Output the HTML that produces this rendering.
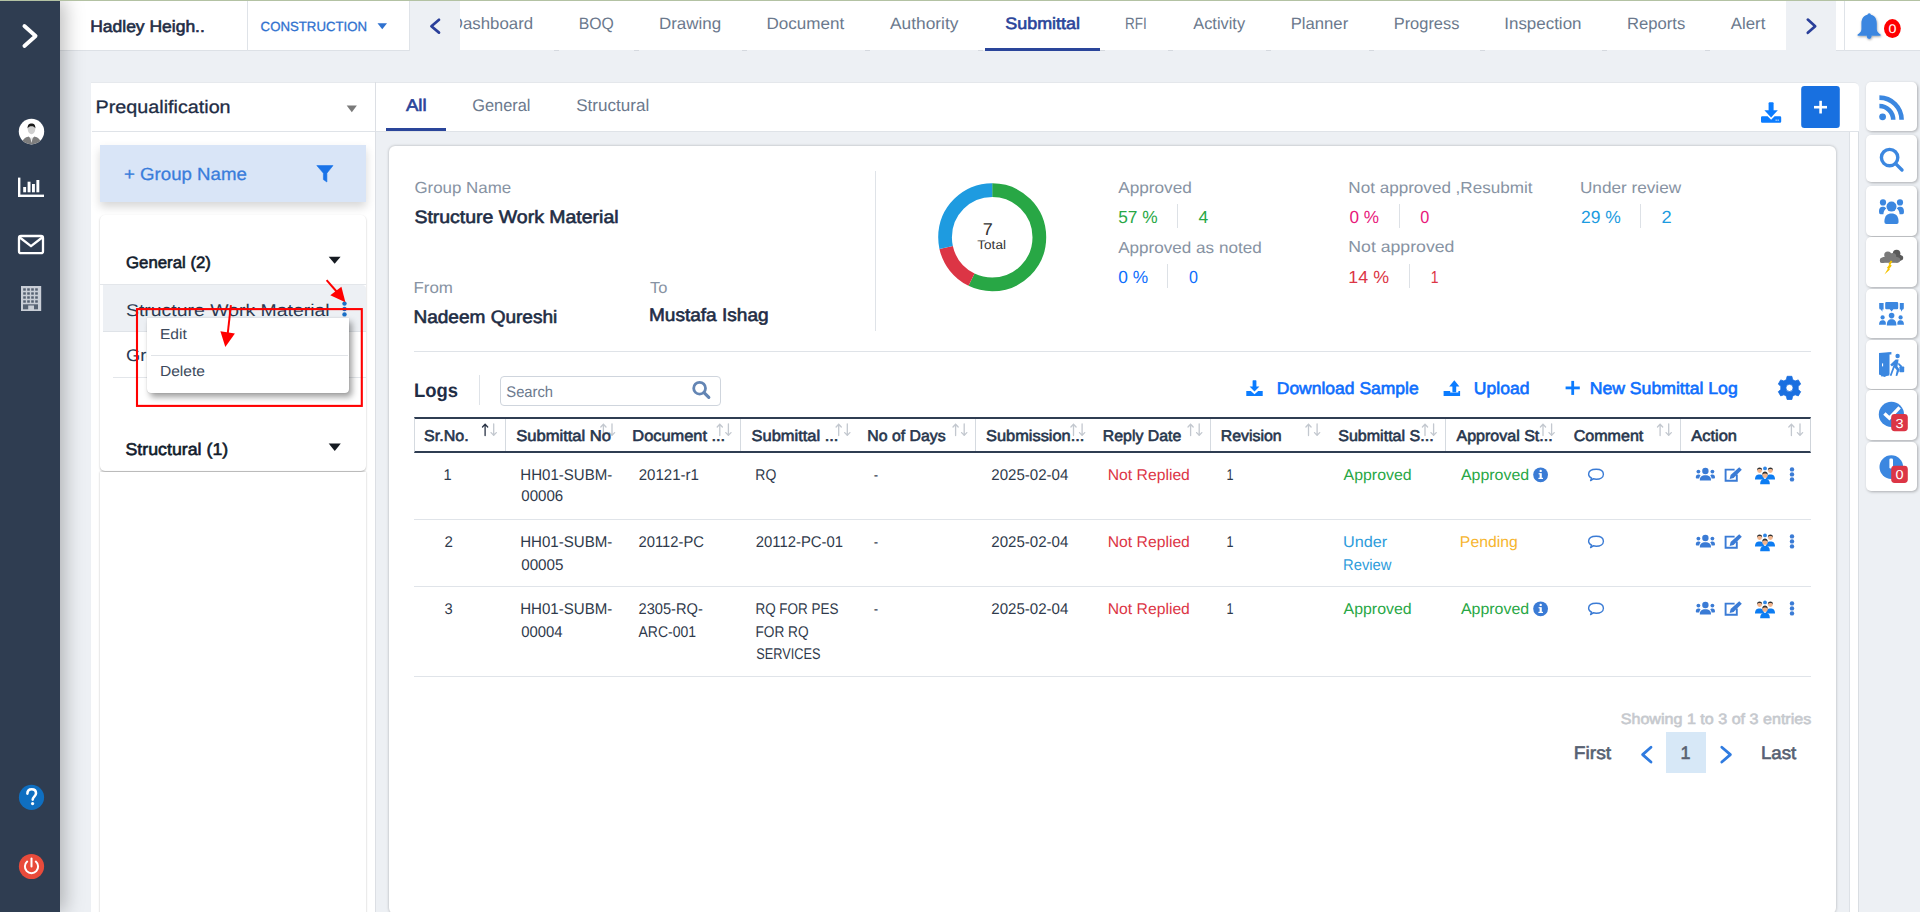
<!DOCTYPE html>
<html><head><meta charset="utf-8">
<style>
*{box-sizing:border-box;margin:0;padding:0}
html,body{width:1920px;height:912px;overflow:hidden}
body{position:relative;background:#edf0f4;font-family:"Liberation Sans",sans-serif}
.a{position:absolute}
svg.ov{position:absolute;left:0;top:0;width:1920px;height:912px;overflow:visible}
svg text{font-family:"Liberation Sans",sans-serif;text-rendering:geometricPrecision}
</style></head><body>
<!-- top line -->
<div class="a" style="left:0;top:0;width:1920px;height:1px;background:#b3c2a3;z-index:20"></div>
<!-- header -->
<div class="a" style="left:60px;top:1px;width:1860px;height:50px;background:#fff;border-bottom:1px solid #dde1e6"></div>
<div class="a" style="left:460px;top:50px;width:1326px;height:1px;background:#edf0f4"></div>
<div class="a" style="left:247px;top:1px;width:1px;height:50px;background:#dfe3e8"></div>
<div class="a" style="left:409px;top:1px;width:1px;height:50px;background:#dfe3e8"></div>
<div class="a" style="left:410px;top:1px;width:50px;height:50px;background:#edf0f4"></div>
<div class="a" style="left:1786px;top:1px;width:50px;height:51px;background:#edf0f4"></div>
<div class="a" style="left:1844px;top:1px;width:1px;height:50px;background:#dfe3e8"></div>
<div class="a" style="left:553.5px;top:50px;width:5px;height:1px;background:#d5d9df"></div><div class="a" style="left:633.5px;top:50px;width:5px;height:1px;background:#d5d9df"></div><div class="a" style="left:741.5px;top:50px;width:5px;height:1px;background:#d5d9df"></div><div class="a" style="left:864.5px;top:50px;width:5px;height:1px;background:#d5d9df"></div><div class="a" style="left:978.0px;top:50px;width:5px;height:1px;background:#d5d9df"></div><div class="a" style="left:1099.5px;top:50px;width:5px;height:1px;background:#d5d9df"></div><div class="a" style="left:1167.5px;top:50px;width:5px;height:1px;background:#d5d9df"></div><div class="a" style="left:1265.5px;top:50px;width:5px;height:1px;background:#d5d9df"></div><div class="a" style="left:1368.5px;top:50px;width:5px;height:1px;background:#d5d9df"></div><div class="a" style="left:1479.5px;top:50px;width:5px;height:1px;background:#d5d9df"></div><div class="a" style="left:1601.5px;top:50px;width:5px;height:1px;background:#d5d9df"></div><div class="a" style="left:1705.1px;top:50px;width:5px;height:1px;background:#d5d9df"></div>
<div class="a" style="left:985px;top:48px;width:115px;height:3px;background:#2a459a;z-index:1"></div>
<!-- sidebar -->
<div class="a" style="left:0;top:0;width:60px;height:912px;background:#2f3d51;box-shadow:5px 0 18px rgba(0,0,0,.26);z-index:10"></div>

<!-- left panel -->
<div class="a" style="left:91px;top:82px;width:285px;height:830px;background:#fff;border-top:1px solid #e6e9ed;border-right:1px solid #dcdfe4"></div>
<div class="a" style="left:92px;top:131px;width:283px;height:1px;background:#dfe3e8"></div>
<div class="a" style="left:100px;top:145px;width:266px;height:57px;background:#d9e5f7;box-shadow:0 5px 9px rgba(0,0,0,.16)"></div>
<div class="a" style="left:100px;top:215px;width:266px;height:256px;background:#fff;border-radius:5px;box-shadow:0 1px 2px rgba(0,0,0,.28)"></div>
<div class="a" style="left:100px;top:472px;width:266px;height:460px;background:#fff;border-radius:0;box-shadow:0 0 2px rgba(0,0,0,.25)"></div>
<div class="a" style="left:100px;top:284px;width:266px;height:1px;background:#e3e6ea"></div>
<div class="a" style="left:103px;top:285px;width:263px;height:47px;background:#edf0f4;border-top-right-radius:4px;border-bottom:1px solid #dfe3e8"></div>
<div class="a" style="left:113px;top:377px;width:253px;height:1px;background:#e3e6ea"></div>

<!-- main container -->
<div class="a" style="left:375px;top:82px;width:1484px;height:830px;background:#edf0f4;border-left:1px solid #dcdfe4"></div>
<div class="a" style="left:376px;top:82px;width:1483px;height:50px;background:#fff;border-top:1px solid #e4e7eb;border-bottom:1px solid #dfe3e8;border-top-right-radius:5px"></div>
<div class="a" style="left:1849px;top:132px;width:10px;height:780px;background:#fff;border-left:1px solid #dde1e6;border-right:1px solid #d9dde2"></div>
<div class="a" style="left:386px;top:128px;width:60px;height:3px;background:#2a459a"></div>
<!-- main card -->
<div class="a" style="left:389px;top:146px;width:1447px;height:768px;background:#fff;border-radius:6px;box-shadow:0 0 3px rgba(0,0,0,.28)"></div>
<div class="a" style="left:875px;top:171px;width:1px;height:160px;background:#dfe3e8"></div>
<div class="a" style="left:414px;top:351px;width:1397px;height:1px;background:#dfe3e8"></div>
<div class="a" style="left:479px;top:375px;width:1px;height:30px;background:#dfe3e8"></div>
<div class="a" style="left:500px;top:376px;width:221px;height:30px;border:1px solid #cfd5dd;border-radius:4px"></div>
<!-- stats separators -->
<div class="a" style="left:1177px;top:204px;width:1px;height:24px;background:#dde1e6"></div>
<div class="a" style="left:1167px;top:264px;width:1px;height:24px;background:#dde1e6"></div>
<div class="a" style="left:1399px;top:204px;width:1px;height:24px;background:#dde1e6"></div>
<div class="a" style="left:1409px;top:264px;width:1px;height:24px;background:#dde1e6"></div>
<div class="a" style="left:1640px;top:204px;width:1px;height:24px;background:#dde1e6"></div>
<!-- table -->
<div class="a" style="left:414px;top:417px;width:1397px;height:36px;border-top:2px solid #2f3d52;border-bottom:2px solid #2f3d52;border-left:1px solid #d5dae0;border-right:1px solid #cfd4da"></div>
<div class="a" style="left:505px;top:419px;width:1px;height:32px;background:#d5dae0"></div>
<div class="a" style="left:740px;top:419px;width:1px;height:32px;background:#d5dae0"></div>
<div class="a" style="left:975px;top:419px;width:1px;height:32px;background:#d5dae0"></div>
<div class="a" style="left:1210px;top:419px;width:1px;height:32px;background:#d5dae0"></div>
<div class="a" style="left:1445px;top:419px;width:1px;height:32px;background:#d5dae0"></div>
<div class="a" style="left:1680px;top:419px;width:1px;height:32px;background:#d5dae0"></div>
<div class="a" style="left:414px;top:519px;width:1397px;height:1px;background:#e0e4e9"></div>
<div class="a" style="left:414px;top:586px;width:1397px;height:1px;background:#e0e4e9"></div>
<div class="a" style="left:414px;top:676px;width:1397px;height:1px;background:#e0e4e9"></div>
<!-- pagination box -->
<div class="a" style="left:1666px;top:732px;width:40px;height:41px;background:#d7e8f7"></div>

<!-- right icon column -->
<div class="a" style="left:1866px;top:82px;width:51px;height:49px;background:#fff;border-radius:5px;box-shadow:1px 1px 3px rgba(0,0,0,.28)"></div>
<div class="a" style="left:1866px;top:135px;width:51px;height:47px;background:#fff;border-radius:5px;box-shadow:1px 1px 3px rgba(0,0,0,.28)"></div>
<div class="a" style="left:1866px;top:186px;width:51px;height:50px;background:#fff;border-radius:5px;box-shadow:1px 1px 3px rgba(0,0,0,.28)"></div>
<div class="a" style="left:1866px;top:237px;width:51px;height:50px;background:#fff;border-radius:5px;box-shadow:1px 1px 3px rgba(0,0,0,.28)"></div>
<div class="a" style="left:1866px;top:289px;width:51px;height:49px;background:#fff;border-radius:5px;box-shadow:1px 1px 3px rgba(0,0,0,.28)"></div>
<div class="a" style="left:1866px;top:340px;width:51px;height:49px;background:#fff;border-radius:5px;box-shadow:1px 1px 3px rgba(0,0,0,.28)"></div>
<div class="a" style="left:1866px;top:390px;width:51px;height:50px;background:#fff;border-radius:5px;box-shadow:1px 1px 3px rgba(0,0,0,.28)"></div>
<div class="a" style="left:1866px;top:442px;width:51px;height:49px;background:#fff;border-radius:5px;box-shadow:1px 1px 3px rgba(0,0,0,.28)"></div>

<!-- main overlay: text + icons -->
<svg class="ov" style="z-index:5" viewBox="0 0 1920 912">
<defs>
<clipPath id="tabclip"><rect x="460" y="0" width="1326" height="50"/></clipPath>
<clipPath id="avclip"><circle cx="31.5" cy="131.5" r="12.5"/></clipPath>
<filter id="sh1" x="-30%" y="-30%" width="160%" height="160%"><feDropShadow dx="0.5" dy="1" stdDeviation="1" flood-opacity=".35"/></filter>
</defs>
<!-- header icons -->
<polygon points="377.5,23.2 387,23.2 382.25,29.2" fill="#2f71cf"/>
<polyline points="439,19.8 431.4,26.2 439,32.6" fill="none" stroke="#2a3f9a" stroke-width="2.7" stroke-linecap="round" stroke-linejoin="round"/>
<polyline points="1807.8,19.6 1815.2,26.2 1807.8,32.8" fill="none" stroke="#2a3f9a" stroke-width="2.7" stroke-linecap="round" stroke-linejoin="round"/>
<g filter="url(#sh1)" fill="#3a86e0">
<path d="M1869.2,14.6 C1874.2,14.6 1876.8,18.4 1876.8,23.6 L1876.8,29.2 C1876.8,31.6 1878.6,33.2 1880.6,34.6 L1880.6,35.8 L1857.6,35.8 L1857.6,34.6 C1859.6,33.2 1861.4,31.6 1861.4,29.2 L1861.4,23.6 C1861.4,18.4 1864.2,14.6 1869.2,14.6 Z"/>
<circle cx="1869.2" cy="14.8" r="1.6"/>
<circle cx="1869.2" cy="36.6" r="2.4"/>
</g>
<ellipse cx="1892.4" cy="28.6" rx="8.4" ry="9.5" fill="#ff0000"/>
<!-- left panel icons -->
<polygon points="346.7,105.5 356.9,105.5 351.8,112.2" fill="#7a7a7a"/>
<path d="M316.8,165.6 L333,165.6 L326.9,173.2 L326.9,182 L323.4,179.6 L323.4,173.2 Z" fill="#1a73e8" stroke="#1a73e8" stroke-width="0.6" stroke-linejoin="round"/>
<polygon points="328.7,256.8 340.6,256.8 334.65,263.7" fill="#161b22"/>
<polygon points="328.7,443.4 340.8,443.4 334.75,451" fill="#161b22"/>
<g fill="#1a6fc7"><circle cx="344.5" cy="303.6" r="2.2"/><circle cx="344.5" cy="309" r="2.2"/><circle cx="344.5" cy="314.4" r="2.2"/></g>
<!-- top right download + plus -->
<g fill="#0b7cff">
<rect x="1768.6" y="102.2" width="5" height="9" rx="1"/>
<polygon points="1764.4,110.2 1777.8,110.2 1771.1,117.4"/>
<path d="M1761,117.4 Q1761,116.2 1762.2,116.2 L1767.6,116.2 L1771.1,119.8 L1774.6,116.2 L1780,116.2 Q1781.2,116.2 1781.2,117.4 L1781.2,121.6 Q1781.2,122.8 1780,122.8 L1762.2,122.8 Q1761,122.8 1761,121.6 Z"/>
</g>
<rect x="1775.6" y="119.6" width="1.1" height="1.1" fill="#fff"/><rect x="1777.6" y="119.6" width="1.1" height="1.1" fill="#fff"/>
<rect x="1801.2" y="86" width="38.6" height="41.9" rx="3.2" fill="#1870e0"/>
<line x1="1814" y1="107.2" x2="1827" y2="107.2" stroke="#fff" stroke-width="2.6"/>
<line x1="1820.6" y1="100.8" x2="1820.6" y2="113.5" stroke="#fff" stroke-width="2.6"/>
<!-- right column -->
<g fill="#3b87e0">
<circle cx="1882.6" cy="116.8" r="3.4"/>
<path d="M1879.4,97.6 A22.2,22.2 0 0 1 1901.6,119.8" fill="none" stroke="#3b87e0" stroke-width="4.6"/>
<path d="M1879.4,106 A13.8,13.8 0 0 1 1893.2,119.8" fill="none" stroke="#3b87e0" stroke-width="4.6"/>
<circle cx="1889.6" cy="157.6" r="8.2" fill="none" stroke="#3b87e0" stroke-width="3.4"/>
<line x1="1895.6" y1="163.6" x2="1902" y2="170" stroke="#3b87e0" stroke-width="3.4" stroke-linecap="round"/>
<!-- people -->
<circle cx="1891.5" cy="206.6" r="5"/>
<path d="M1884.4,222 C1884.4,215.5 1887.4,213.4 1891.5,213.4 C1895.6,213.4 1898.6,215.5 1898.6,222 Q1898.6,224 1896.6,224 L1886.4,224 Q1884.4,224 1884.4,222 Z"/>
<circle cx="1883" cy="202.4" r="3.1"/><circle cx="1900" cy="202.4" r="3.1"/>
<path d="M1879,212 C1879,207.8 1880.6,206.8 1883,206.8 C1884.6,206.8 1885.6,207.4 1886.2,208.6 C1884.6,209.8 1883.6,211.6 1883.4,214.2 L1880.6,214.2 Q1879,214.2 1879,212 Z"/>
<path d="M1904,212 C1904,207.8 1902.4,206.8 1900,206.8 C1898.4,206.8 1897.4,207.4 1896.8,208.6 C1898.4,209.8 1899.4,211.6 1899.6,214.2 L1902.4,214.2 Q1904,214.2 1904,212 Z"/>
</g>
<!-- storm -->
<g fill="#595959"><circle cx="1896.6" cy="253.6" r="3.8"/><circle cx="1900.6" cy="257.8" r="2.6"/><rect x="1894" y="255" width="7" height="5.6"/></g>
<g fill="#7a7a7a"><circle cx="1882.6" cy="260.2" r="2.7"/><circle cx="1887.8" cy="255" r="3.6"/><circle cx="1892.8" cy="256.4" r="3.4"/><circle cx="1897.4" cy="260" r="2.8"/><rect x="1882.6" y="257" width="15" height="5.8"/><rect x="1880" y="260" width="4" height="2.8" rx="1.4"/></g>
<path d="M1890.8,260.4 L1892.4,261.2 L1890.4,264.8 L1891.8,265.4 L1889.2,269 L1890,269.4 L1884.4,274.6 L1888,268.6 L1886.8,268 L1889.4,264.6 L1888.4,264 Z" fill="#f4c300"/>
<!-- meeting -->
<g fill="#3b87e0">
<path d="M1886.4,302 L1897,302 Q1898.2,302 1898.2,303.2 L1898.2,308 Q1898.2,309.2 1897,309.2 L1893.4,309.2 L1891.6,311.6 L1889.8,309.2 L1886.4,309.2 Q1885.2,309.2 1885.2,308 L1885.2,303.2 Q1885.2,302 1886.4,302 Z"/>
<path d="M1879.2,303 L1883.6,303 L1883.6,309.6 L1882.4,309.6 L1882.4,311.8 L1880.8,309.6 Q1879.2,309.6 1879.2,308 Z"/>
<path d="M1903.8,303 L1899.8,303 L1899.8,309.6 L1901,309.6 L1901,311.8 L1902.6,309.6 Q1903.8,309.6 1903.8,308 Z"/>
<circle cx="1891.6" cy="315.6" r="2.8"/>
<path d="M1886.8,325.6 C1886.8,320.8 1888.6,319.2 1891.6,319.2 C1894.6,319.2 1896.4,320.8 1896.4,325.6 Z"/>
<circle cx="1882.6" cy="317.4" r="2.1"/><circle cx="1900.6" cy="317.4" r="2.1"/>
<path d="M1879,324.8 C1879,321.4 1880.4,320.2 1882.6,320.2 C1884.2,320.2 1885.4,320.8 1885.8,322.4 L1885.8,324.8 Z"/>
<path d="M1904,324.8 C1904,321.4 1902.6,320.2 1900.6,320.2 C1899,320.2 1897.8,320.8 1897.4,322.4 L1897.4,324.8 Z"/>
</g>
<!-- door exit -->
<g fill="#3b87e0">
<path d="M1879,353 L1891.4,352 L1891.4,354.6 L1889.4,354.6 L1889.4,374.4 L1884.6,377 L1879,374.6 Z"/>
<path d="M1881.2,353.4 L1889.2,352.8 L1889.2,375.4 L1881.2,376.4 Z" fill="#3b87e0"/>
<circle cx="1897.6" cy="356" r="2.2"/>
<path d="M1895.6,359.4 L1898.6,359.6 L1897.4,366.4 L1899.6,369.4 L1897.2,376 L1895.6,375.8 L1896.8,370.2 L1894.6,367.6 L1891.4,376 L1889.8,375.4 L1893.6,365 L1892,366.4 L1890.2,364.8 Z"/>
<path d="M1898.4,362.4 L1902.4,366.2 L1900.8,367.4 L1898.2,364.8 Z"/>
<rect x="1899.4" y="366.4" width="4.8" height="5.8" rx="0.8"/>
</g>
<rect x="1882" y="363.4" width="1.1" height="3" fill="#fff"/>
<!-- check circle + badge -->
<circle cx="1891.4" cy="414.4" r="12.6" fill="#3b87e0"/>
<polyline points="1884.4,413.4 1889.4,418.2 1899.6,407.4" fill="none" stroke="#fff" stroke-width="3.4"/>
<rect x="1891.2" y="414" width="16.6" height="17.2" rx="3.4" fill="#dc3545"/>
<!-- info circle + badge -->
<circle cx="1891.3" cy="467.1" r="11.8" fill="#3b87e0"/>
<rect x="1889.4" y="458.6" width="3.6" height="9.8" rx="1.2" fill="#fff"/>
<rect x="1891.2" y="465.8" width="16.6" height="17.2" rx="3.4" fill="#dc3545"/>
<!-- donut -->
<g transform="rotate(-90 992.2 237.3)" fill="none" stroke-width="13.7">
<circle cx="992.2" cy="237.3" r="47.15" stroke="#28a745" stroke-dasharray="169.29 400"/>
<circle cx="992.2" cy="237.3" r="47.15" stroke="#dc3545" stroke-dasharray="42.32 400" stroke-dashoffset="-169.29"/>
<circle cx="992.2" cy="237.3" r="47.15" stroke="#1e9be0" stroke-dasharray="84.64 400" stroke-dashoffset="-211.61"/>
</g>
<!-- search icon -->
<circle cx="699.6" cy="388.2" r="5.9" fill="none" stroke="#6385b4" stroke-width="2.8"/>
<line x1="704" y1="392.6" x2="708.8" y2="397.4" stroke="#6385b4" stroke-width="3.2" stroke-linecap="round"/>
<!-- download sample -->
<g fill="#0b7cff">
<rect x="1252.6" y="380.3" width="3.8" height="7" rx="0.6"/>
<polygon points="1249.6,386.4 1259.4,386.4 1254.5,391.6"/>
<path d="M1246.3,391 L1250.8,391 L1254.5,394.2 L1258.2,391 L1262.7,391 L1262.7,396 L1246.3,396 Z"/>
<rect x="1452.4" y="385.6" width="3.8" height="6.6" rx="0.6"/>
<polygon points="1449.2,386.6 1459.4,386.6 1454.3,380.3"/>
<path d="M1443.6,391 L1450.2,391 L1450.2,392.6 L1458.4,392.6 L1458.4,391 L1460.1,391 L1460.1,396 L1443.6,396 Z"/>
</g>
<line x1="1565.6" y1="387.9" x2="1579.8" y2="387.9" stroke="#0b7cff" stroke-width="2.8"/>
<line x1="1572.7" y1="380.9" x2="1572.7" y2="394.9" stroke="#0b7cff" stroke-width="2.8"/>
<!-- gear -->
<g transform="translate(1789.5 387.9)">
<path fill="#1a6fe0" fill-rule="evenodd" d="M-2.4,-11.6 L2.4,-11.6 L3.1,-8.3 L5.6,-6.9 L8.8,-8 L11.2,-3.8 L8.7,-1.6 L8.7,1.6 L11.2,3.8 L8.8,8 L5.6,6.9 L3.1,8.3 L2.4,11.6 L-2.4,11.6 L-3.1,8.3 L-5.6,6.9 L-8.8,8 L-11.2,3.8 L-8.7,1.6 L-8.7,-1.6 L-11.2,-3.8 L-8.8,-8 L-5.6,-6.9 L-3.1,-8.3 Z M0,-3.6 A3.6,3.6 0 1 0 0,3.6 A3.6,3.6 0 1 0 0,-3.6 Z" stroke="#1a6fe0" stroke-width="0.8" stroke-linejoin="round"/>
</g>
<g fill="none" stroke-width="1.3" stroke-linecap="round" stroke-linejoin="round"><path d="M485.1,435.6 L485.1,424.2 M482.5,427 L485.1,424.2 L487.7,427" stroke="#2a3446"/><path d="M493.7,423.8 L493.7,435.4 M491.1,432.6 L493.7,435.4 L496.3,432.6" stroke="#c3c8cf"/></g>
<g fill="none" stroke-width="1.3" stroke-linecap="round" stroke-linejoin="round"><path d="M603.4,435.6 L603.4,424.2 M600.8,427 L603.4,424.2 L606.0,427" stroke="#c3c8cf"/><path d="M612.0,423.8 L612.0,435.4 M609.4,432.6 L612.0,435.4 L614.6,432.6" stroke="#c3c8cf"/></g>
<g fill="none" stroke-width="1.3" stroke-linecap="round" stroke-linejoin="round"><path d="M719.8,435.6 L719.8,424.2 M717.2,427 L719.8,424.2 L722.4,427" stroke="#c3c8cf"/><path d="M728.4,423.8 L728.4,435.4 M725.8,432.6 L728.4,435.4 L731.0,432.6" stroke="#c3c8cf"/></g>
<g fill="none" stroke-width="1.3" stroke-linecap="round" stroke-linejoin="round"><path d="M838.7,435.6 L838.7,424.2 M836.1,427 L838.7,424.2 L841.3,427" stroke="#c3c8cf"/><path d="M847.3,423.8 L847.3,435.4 M844.7,432.6 L847.3,435.4 L849.9,432.6" stroke="#c3c8cf"/></g>
<g fill="none" stroke-width="1.3" stroke-linecap="round" stroke-linejoin="round"><path d="M955.6,435.6 L955.6,424.2 M953.0,427 L955.6,424.2 L958.2,427" stroke="#c3c8cf"/><path d="M964.2,423.8 L964.2,435.4 M961.6,432.6 L964.2,435.4 L966.8,432.6" stroke="#c3c8cf"/></g>
<g fill="none" stroke-width="1.3" stroke-linecap="round" stroke-linejoin="round"><path d="M1073.5,435.6 L1073.5,424.2 M1070.9,427 L1073.5,424.2 L1076.1,427" stroke="#c3c8cf"/><path d="M1082.1,423.8 L1082.1,435.4 M1079.5,432.6 L1082.1,435.4 L1084.7,432.6" stroke="#c3c8cf"/></g>
<g fill="none" stroke-width="1.3" stroke-linecap="round" stroke-linejoin="round"><path d="M1190.6,435.6 L1190.6,424.2 M1188.0,427 L1190.6,424.2 L1193.2,427" stroke="#c3c8cf"/><path d="M1199.2,423.8 L1199.2,435.4 M1196.6,432.6 L1199.2,435.4 L1201.8,432.6" stroke="#c3c8cf"/></g>
<g fill="none" stroke-width="1.3" stroke-linecap="round" stroke-linejoin="round"><path d="M1308.5,435.6 L1308.5,424.2 M1305.9,427 L1308.5,424.2 L1311.1,427" stroke="#c3c8cf"/><path d="M1317.1,423.8 L1317.1,435.4 M1314.5,432.6 L1317.1,435.4 L1319.7,432.6" stroke="#c3c8cf"/></g>
<g fill="none" stroke-width="1.3" stroke-linecap="round" stroke-linejoin="round"><path d="M1425.0,435.6 L1425.0,424.2 M1422.4,427 L1425.0,424.2 L1427.6,427" stroke="#c3c8cf"/><path d="M1433.6,423.8 L1433.6,435.4 M1431.0,432.6 L1433.6,435.4 L1436.2,432.6" stroke="#c3c8cf"/></g>
<g fill="none" stroke-width="1.3" stroke-linecap="round" stroke-linejoin="round"><path d="M1543.0,435.6 L1543.0,424.2 M1540.4,427 L1543.0,424.2 L1545.6,427" stroke="#c3c8cf"/><path d="M1551.6,423.8 L1551.6,435.4 M1549.0,432.6 L1551.6,435.4 L1554.2,432.6" stroke="#c3c8cf"/></g>
<g fill="none" stroke-width="1.3" stroke-linecap="round" stroke-linejoin="round"><path d="M1660.1,435.6 L1660.1,424.2 M1657.5,427 L1660.1,424.2 L1662.7,427" stroke="#c3c8cf"/><path d="M1668.7,423.8 L1668.7,435.4 M1666.1,432.6 L1668.7,435.4 L1671.3,432.6" stroke="#c3c8cf"/></g>
<g fill="none" stroke-width="1.3" stroke-linecap="round" stroke-linejoin="round"><path d="M1791.4,435.6 L1791.4,424.2 M1788.8,427 L1791.4,424.2 L1794.0,427" stroke="#c3c8cf"/><path d="M1800.0,423.8 L1800.0,435.4 M1797.4,432.6 L1800.0,435.4 L1802.6,432.6" stroke="#c3c8cf"/></g>
<circle cx="1540.6" cy="474.8" r="7.4" fill="#3a7bd5"/><rect x="1539.6" y="473.2" width="2.2" height="5.6" fill="#fff"/><circle cx="1540.7" cy="470.9" r="1.2" fill="#fff"/><rect x="1538.4" y="477.8" width="4.6" height="1.2" fill="#fff"/><rect x="1538.6" y="473.2" width="2" height="1.1" fill="#fff"/>
<path d="M1590.6,480.6 L1591.6,478.2 C1589.4,477.0 1588.6,475.6 1588.6,474.2 C1588.6,471.0 1591.8,469.2 1596.2,469.2 C1600.6,469.2 1603.4,471.2 1603.4,474.2 C1603.4,477.2 1600.4,479.2 1596.2,479.2 C1595.2,479.2 1594,479.0 1593.2,478.8 Z" fill="none" stroke="#3a7bd5" stroke-width="1.4" stroke-linejoin="round"/>
<g fill="#3a7bd5" transform="translate(0 0)"><circle cx="1705.4" cy="471" r="3.2"/><path d="M1699.8,480.4 C1699.8,476.6 1701.6,475.2 1705.4,475.2 C1709.2,475.2 1711,476.6 1711,480.4 Z"/><circle cx="1698.4" cy="471.6" r="1.9"/><circle cx="1712.4" cy="471.6" r="1.9"/><path d="M1695.8,477.8 C1695.8,475.4 1696.6,474.4 1698.4,474.4 C1699.4,474.4 1700.2,474.8 1700.6,475.6 C1699.8,476.4 1699.4,477.2 1699.2,478.4 L1696.4,478.4 Z"/><path d="M1715,477.8 C1715,475.4 1714.2,474.4 1712.4,474.4 C1711.4,474.4 1710.6,474.8 1710.2,475.6 C1711,476.4 1711.4,477.2 1711.6,478.4 L1714.4,478.4 Z"/></g>
<g transform="translate(0 0)"><path d="M1734.6,469.6 L1725.6,469.6 L1725.6,480.8 L1736.8,480.8 L1736.8,474.6" fill="none" stroke="#3a7bd5" stroke-width="1.9"/><path d="M1739.2,467.2 L1741.8,469.8 L1733.6,478 L1729.6,479 L1730.6,475 Z" fill="#3a7bd5"/></g>
<g transform="translate(0 0)"><circle cx="1759.6" cy="470.6" r="2.4" fill="#f2b48c"/><path d="M1757,470.4 C1757,468 1758.4,467.4 1759.6,467.4 C1760.8,467.4 1762.2,468 1762.2,470.4 C1761.6,469.2 1760.6,469 1759.6,469 C1758.6,469 1757.6,469.2 1757,470.4Z" fill="#333"/><path d="M1755,479.6 C1755,475.6 1756.8,474.4 1759.6,474.4 C1762.4,474.4 1764,475.6 1764,479.6 Z" fill="#0c7cf2"/><circle cx="1770.4" cy="470.6" r="2.4" fill="#f2b48c"/><path d="M1767.8,470.4 C1767.8,468 1769.2,467.4 1770.4,467.4 C1771.6,467.4 1773,468 1773,470.4 C1772.4,469.2 1771.4,469 1770.4,469 C1769.4,469 1768.4,469.2 1767.8,470.4Z" fill="#333"/><path d="M1766,479.6 C1766,475.6 1767.6,474.4 1770.4,474.4 C1773.2,474.4 1775,475.6 1775,479.6 Z" fill="#0c7cf2"/><circle cx="1765" cy="468.4" r="1.9" fill="#2f86e6"/><circle cx="1765" cy="475.2" r="2.6" fill="#f2b48c"/><path d="M1762.2,475 C1762.2,472.2 1763.6,471.6 1765,471.6 C1766.4,471.6 1767.8,472.2 1767.8,475 C1767,473.8 1766,473.6 1765,473.6 C1764,473.6 1763,473.8 1762.2,475Z" fill="#333"/><path d="M1760.2,484.2 C1760.2,480.2 1762,478.8 1765,478.8 C1768,478.8 1769.8,480.2 1769.8,484.2 Z" fill="#0c7cf2"/></g>
<g fill="#3a7bd5"><circle cx="1792" cy="469.4" r="2.2"/><circle cx="1792" cy="474.4" r="2.2"/><circle cx="1792" cy="479.4" r="2.2"/></g>
<path d="M1590.6,547.6 L1591.6,545.2 C1589.4,544.0 1588.6,542.6 1588.6,541.2 C1588.6,538.0 1591.8,536.2 1596.2,536.2 C1600.6,536.2 1603.4,538.2 1603.4,541.2 C1603.4,544.2 1600.4,546.2 1596.2,546.2 C1595.2,546.2 1594,546.0 1593.2,545.8 Z" fill="none" stroke="#3a7bd5" stroke-width="1.4" stroke-linejoin="round"/>
<g fill="#3a7bd5" transform="translate(0 67)"><circle cx="1705.4" cy="471" r="3.2"/><path d="M1699.8,480.4 C1699.8,476.6 1701.6,475.2 1705.4,475.2 C1709.2,475.2 1711,476.6 1711,480.4 Z"/><circle cx="1698.4" cy="471.6" r="1.9"/><circle cx="1712.4" cy="471.6" r="1.9"/><path d="M1695.8,477.8 C1695.8,475.4 1696.6,474.4 1698.4,474.4 C1699.4,474.4 1700.2,474.8 1700.6,475.6 C1699.8,476.4 1699.4,477.2 1699.2,478.4 L1696.4,478.4 Z"/><path d="M1715,477.8 C1715,475.4 1714.2,474.4 1712.4,474.4 C1711.4,474.4 1710.6,474.8 1710.2,475.6 C1711,476.4 1711.4,477.2 1711.6,478.4 L1714.4,478.4 Z"/></g>
<g transform="translate(0 67)"><path d="M1734.6,469.6 L1725.6,469.6 L1725.6,480.8 L1736.8,480.8 L1736.8,474.6" fill="none" stroke="#3a7bd5" stroke-width="1.9"/><path d="M1739.2,467.2 L1741.8,469.8 L1733.6,478 L1729.6,479 L1730.6,475 Z" fill="#3a7bd5"/></g>
<g transform="translate(0 67)"><circle cx="1759.6" cy="470.6" r="2.4" fill="#f2b48c"/><path d="M1757,470.4 C1757,468 1758.4,467.4 1759.6,467.4 C1760.8,467.4 1762.2,468 1762.2,470.4 C1761.6,469.2 1760.6,469 1759.6,469 C1758.6,469 1757.6,469.2 1757,470.4Z" fill="#333"/><path d="M1755,479.6 C1755,475.6 1756.8,474.4 1759.6,474.4 C1762.4,474.4 1764,475.6 1764,479.6 Z" fill="#0c7cf2"/><circle cx="1770.4" cy="470.6" r="2.4" fill="#f2b48c"/><path d="M1767.8,470.4 C1767.8,468 1769.2,467.4 1770.4,467.4 C1771.6,467.4 1773,468 1773,470.4 C1772.4,469.2 1771.4,469 1770.4,469 C1769.4,469 1768.4,469.2 1767.8,470.4Z" fill="#333"/><path d="M1766,479.6 C1766,475.6 1767.6,474.4 1770.4,474.4 C1773.2,474.4 1775,475.6 1775,479.6 Z" fill="#0c7cf2"/><circle cx="1765" cy="468.4" r="1.9" fill="#2f86e6"/><circle cx="1765" cy="475.2" r="2.6" fill="#f2b48c"/><path d="M1762.2,475 C1762.2,472.2 1763.6,471.6 1765,471.6 C1766.4,471.6 1767.8,472.2 1767.8,475 C1767,473.8 1766,473.6 1765,473.6 C1764,473.6 1763,473.8 1762.2,475Z" fill="#333"/><path d="M1760.2,484.2 C1760.2,480.2 1762,478.8 1765,478.8 C1768,478.8 1769.8,480.2 1769.8,484.2 Z" fill="#0c7cf2"/></g>
<g fill="#3a7bd5"><circle cx="1792" cy="536.4" r="2.2"/><circle cx="1792" cy="541.4" r="2.2"/><circle cx="1792" cy="546.4" r="2.2"/></g>
<circle cx="1540.6" cy="608.8" r="7.4" fill="#3a7bd5"/><rect x="1539.6" y="607.2" width="2.2" height="5.6" fill="#fff"/><circle cx="1540.7" cy="604.9" r="1.2" fill="#fff"/><rect x="1538.4" y="611.8" width="4.6" height="1.2" fill="#fff"/><rect x="1538.6" y="607.2" width="2" height="1.1" fill="#fff"/>
<path d="M1590.6,614.6 L1591.6,612.2 C1589.4,611.0 1588.6,609.6 1588.6,608.2 C1588.6,605.0 1591.8,603.2 1596.2,603.2 C1600.6,603.2 1603.4,605.2 1603.4,608.2 C1603.4,611.2 1600.4,613.2 1596.2,613.2 C1595.2,613.2 1594,613.0 1593.2,612.8 Z" fill="none" stroke="#3a7bd5" stroke-width="1.4" stroke-linejoin="round"/>
<g fill="#3a7bd5" transform="translate(0 134)"><circle cx="1705.4" cy="471" r="3.2"/><path d="M1699.8,480.4 C1699.8,476.6 1701.6,475.2 1705.4,475.2 C1709.2,475.2 1711,476.6 1711,480.4 Z"/><circle cx="1698.4" cy="471.6" r="1.9"/><circle cx="1712.4" cy="471.6" r="1.9"/><path d="M1695.8,477.8 C1695.8,475.4 1696.6,474.4 1698.4,474.4 C1699.4,474.4 1700.2,474.8 1700.6,475.6 C1699.8,476.4 1699.4,477.2 1699.2,478.4 L1696.4,478.4 Z"/><path d="M1715,477.8 C1715,475.4 1714.2,474.4 1712.4,474.4 C1711.4,474.4 1710.6,474.8 1710.2,475.6 C1711,476.4 1711.4,477.2 1711.6,478.4 L1714.4,478.4 Z"/></g>
<g transform="translate(0 134)"><path d="M1734.6,469.6 L1725.6,469.6 L1725.6,480.8 L1736.8,480.8 L1736.8,474.6" fill="none" stroke="#3a7bd5" stroke-width="1.9"/><path d="M1739.2,467.2 L1741.8,469.8 L1733.6,478 L1729.6,479 L1730.6,475 Z" fill="#3a7bd5"/></g>
<g transform="translate(0 134)"><circle cx="1759.6" cy="470.6" r="2.4" fill="#f2b48c"/><path d="M1757,470.4 C1757,468 1758.4,467.4 1759.6,467.4 C1760.8,467.4 1762.2,468 1762.2,470.4 C1761.6,469.2 1760.6,469 1759.6,469 C1758.6,469 1757.6,469.2 1757,470.4Z" fill="#333"/><path d="M1755,479.6 C1755,475.6 1756.8,474.4 1759.6,474.4 C1762.4,474.4 1764,475.6 1764,479.6 Z" fill="#0c7cf2"/><circle cx="1770.4" cy="470.6" r="2.4" fill="#f2b48c"/><path d="M1767.8,470.4 C1767.8,468 1769.2,467.4 1770.4,467.4 C1771.6,467.4 1773,468 1773,470.4 C1772.4,469.2 1771.4,469 1770.4,469 C1769.4,469 1768.4,469.2 1767.8,470.4Z" fill="#333"/><path d="M1766,479.6 C1766,475.6 1767.6,474.4 1770.4,474.4 C1773.2,474.4 1775,475.6 1775,479.6 Z" fill="#0c7cf2"/><circle cx="1765" cy="468.4" r="1.9" fill="#2f86e6"/><circle cx="1765" cy="475.2" r="2.6" fill="#f2b48c"/><path d="M1762.2,475 C1762.2,472.2 1763.6,471.6 1765,471.6 C1766.4,471.6 1767.8,472.2 1767.8,475 C1767,473.8 1766,473.6 1765,473.6 C1764,473.6 1763,473.8 1762.2,475Z" fill="#333"/><path d="M1760.2,484.2 C1760.2,480.2 1762,478.8 1765,478.8 C1768,478.8 1769.8,480.2 1769.8,484.2 Z" fill="#0c7cf2"/></g>
<g fill="#3a7bd5"><circle cx="1792" cy="603.4" r="2.2"/><circle cx="1792" cy="608.4" r="2.2"/><circle cx="1792" cy="613.4" r="2.2"/></g>
<!-- pagination chevrons -->
<polyline points="1651,747.2 1642.6,754.6 1651,762" fill="none" stroke="#2f7be0" stroke-width="2.8" stroke-linecap="round" stroke-linejoin="round"/>
<polyline points="1721.8,747.2 1730.4,754.6 1721.8,762" fill="none" stroke="#2f7be0" stroke-width="2.8" stroke-linecap="round" stroke-linejoin="round"/>

<g clip-path="url(#tabclip)"><text x="450.85" y="29.20" font-size="16.5" font-weight="normal" fill="#6b798d" textLength="82.33" lengthAdjust="spacingAndGlyphs">Dashboard</text></g>
<text x="90.19" y="31.80" font-size="16.5" font-weight="normal" fill="#1f2d45" stroke="#1f2d45" stroke-width="0.6" textLength="114.63" lengthAdjust="spacingAndGlyphs">Hadley Heigh..</text>
<text x="260.60" y="30.60" font-size="13.3" font-weight="normal" fill="#2f71cf" stroke="#2f71cf" stroke-width="0.3" textLength="106.50" lengthAdjust="spacingAndGlyphs">CONSTRUCTION</text>
<text x="578.74" y="29.20" font-size="16.5" font-weight="normal" fill="#6b798d" textLength="35.10" lengthAdjust="spacingAndGlyphs">BOQ</text>
<text x="658.97" y="29.20" font-size="16.5" font-weight="normal" fill="#6b798d" textLength="62.21" lengthAdjust="spacingAndGlyphs">Drawing</text>
<text x="766.47" y="29.20" font-size="16.5" font-weight="normal" fill="#6b798d" textLength="77.80" lengthAdjust="spacingAndGlyphs">Document</text>
<text x="890.00" y="29.20" font-size="16.5" font-weight="normal" fill="#6b798d" textLength="68.41" lengthAdjust="spacingAndGlyphs">Authority</text>
<text x="1124.98" y="29.20" font-size="16.5" font-weight="normal" fill="#6b798d" textLength="21.80" lengthAdjust="spacingAndGlyphs">RFI</text>
<text x="1193.30" y="29.20" font-size="16.5" font-weight="normal" fill="#6b798d" textLength="51.76" lengthAdjust="spacingAndGlyphs">Activity</text>
<text x="1290.69" y="29.20" font-size="16.5" font-weight="normal" fill="#6b798d" textLength="57.50" lengthAdjust="spacingAndGlyphs">Planner</text>
<text x="1393.70" y="29.20" font-size="16.5" font-weight="normal" fill="#6b798d" textLength="65.74" lengthAdjust="spacingAndGlyphs">Progress</text>
<text x="1504.27" y="29.20" font-size="16.5" font-weight="normal" fill="#6b798d" textLength="77.21" lengthAdjust="spacingAndGlyphs">Inspection</text>
<text x="1626.99" y="29.20" font-size="16.5" font-weight="normal" fill="#6b798d" textLength="58.26" lengthAdjust="spacingAndGlyphs">Reports</text>
<text x="1730.80" y="29.20" font-size="16.5" font-weight="normal" fill="#6b798d" textLength="34.58" lengthAdjust="spacingAndGlyphs">Alert</text>
<text x="1005.30" y="29.20" font-size="16.5" font-weight="normal" fill="#2a459a" stroke="#2a459a" stroke-width="0.6" textLength="74.72" lengthAdjust="spacingAndGlyphs">Submittal</text>
<text x="1888.50" y="33.20" font-size="12.5" font-weight="normal" fill="#ffffff" textLength="7.95" lengthAdjust="spacingAndGlyphs">0</text>
<text x="95.60" y="113.00" font-size="18" font-weight="normal" fill="#1f2d45" stroke="#1f2d45" stroke-width="0.3" textLength="135.01" lengthAdjust="spacingAndGlyphs">Prequalification</text>
<text x="124.00" y="179.70" font-size="17.5" font-weight="normal" fill="#3a7ddb" stroke="#3a7ddb" stroke-width="0.3" textLength="122.78" lengthAdjust="spacingAndGlyphs">+ Group Name</text>
<text x="126.00" y="268.00" font-size="16.5" font-weight="normal" fill="#121c2c" stroke="#121c2c" stroke-width="0.6" textLength="84.90" lengthAdjust="spacingAndGlyphs">General (2)</text>
<text x="126.00" y="316.00" font-size="17" font-weight="normal" fill="#2b3a52" textLength="203.59" lengthAdjust="spacingAndGlyphs">Structure Work Material</text>
<text x="126.00" y="360.70" font-size="17" font-weight="normal" fill="#2b3a52" textLength="105.10" lengthAdjust="spacingAndGlyphs">Group Name</text>
<text x="125.50" y="455.00" font-size="17" font-weight="normal" fill="#121c2c" stroke="#121c2c" stroke-width="0.6" textLength="102.69" lengthAdjust="spacingAndGlyphs">Structural (1)</text>
<text x="405.90" y="111.00" font-size="17" font-weight="normal" fill="#2a459a" stroke="#2a459a" stroke-width="0.6" textLength="20.75" lengthAdjust="spacingAndGlyphs">All</text>
<text x="472.20" y="111.00" font-size="17" font-weight="normal" fill="#6b798d" textLength="58.25" lengthAdjust="spacingAndGlyphs">General</text>
<text x="576.25" y="111.00" font-size="17" font-weight="normal" fill="#6b798d" textLength="72.93" lengthAdjust="spacingAndGlyphs">Structural</text>
<text x="414.40" y="192.60" font-size="16" font-weight="normal" fill="#8793a3" textLength="96.74" lengthAdjust="spacingAndGlyphs">Group Name</text>
<text x="414.40" y="222.60" font-size="18" font-weight="normal" fill="#1f2d45" stroke="#1f2d45" stroke-width="0.6" textLength="204.18" lengthAdjust="spacingAndGlyphs">Structure Work Material</text>
<text x="413.44" y="293.25" font-size="16" font-weight="normal" fill="#8793a3" textLength="39.40" lengthAdjust="spacingAndGlyphs">From</text>
<text x="413.44" y="323.25" font-size="18" font-weight="normal" fill="#1f2d45" stroke="#1f2d45" stroke-width="0.6" textLength="143.86" lengthAdjust="spacingAndGlyphs">Nadeem Qureshi</text>
<text x="650.00" y="293.25" font-size="16" font-weight="normal" fill="#8793a3" textLength="17.40" lengthAdjust="spacingAndGlyphs">To</text>
<text x="648.94" y="320.75" font-size="18" font-weight="normal" fill="#1f2d45" stroke="#1f2d45" stroke-width="0.6" textLength="119.63" lengthAdjust="spacingAndGlyphs">Mustafa Ishag</text>
<text x="982.80" y="235.30" font-size="17" font-weight="normal" fill="#333333" textLength="10.08" lengthAdjust="spacingAndGlyphs">7</text>
<text x="977.30" y="249.00" font-size="12.5" font-weight="normal" fill="#333333" textLength="28.64" lengthAdjust="spacingAndGlyphs">Total</text>
<text x="1118.20" y="192.80" font-size="16" font-weight="normal" fill="#8793a3" textLength="73.67" lengthAdjust="spacingAndGlyphs">Approved</text>
<text x="1118.20" y="223.00" font-size="17.5" font-weight="normal" fill="#28a745" textLength="39.45" lengthAdjust="spacingAndGlyphs">57 %</text>
<text x="1198.40" y="223.00" font-size="17.5" font-weight="normal" fill="#28a745" textLength="9.73" lengthAdjust="spacingAndGlyphs">4</text>
<text x="1118.20" y="252.60" font-size="16" font-weight="normal" fill="#8793a3" textLength="143.46" lengthAdjust="spacingAndGlyphs">Approved as noted</text>
<text x="1118.20" y="282.90" font-size="17.5" font-weight="normal" fill="#0d6efd" textLength="29.85" lengthAdjust="spacingAndGlyphs">0 %</text>
<text x="1189.00" y="282.90" font-size="17.5" font-weight="normal" fill="#0d6efd" textLength="8.95" lengthAdjust="spacingAndGlyphs">0</text>
<text x="1348.33" y="192.80" font-size="16" font-weight="normal" fill="#8793a3" textLength="184.18" lengthAdjust="spacingAndGlyphs">Not approved ,Resubmit</text>
<text x="1349.40" y="222.60" font-size="17.5" font-weight="normal" fill="#e8197b" textLength="29.55" lengthAdjust="spacingAndGlyphs">0 %</text>
<text x="1420.30" y="222.60" font-size="17.5" font-weight="normal" fill="#e8197b" textLength="9.05" lengthAdjust="spacingAndGlyphs">0</text>
<text x="1348.30" y="252.40" font-size="16" font-weight="normal" fill="#8793a3" textLength="106.10" lengthAdjust="spacingAndGlyphs">Not approved</text>
<text x="1348.38" y="282.60" font-size="17.5" font-weight="normal" fill="#dc3545" textLength="40.59" lengthAdjust="spacingAndGlyphs">14 %</text>
<text x="1430.70" y="282.60" font-size="17.5" font-weight="normal" fill="#dc3545" textLength="7.79" lengthAdjust="spacingAndGlyphs">1</text>
<text x="1579.93" y="192.80" font-size="16" font-weight="normal" fill="#8793a3" textLength="101.20" lengthAdjust="spacingAndGlyphs">Under review</text>
<text x="1581.00" y="222.60" font-size="17.5" font-weight="normal" fill="#1c9be0" textLength="39.86" lengthAdjust="spacingAndGlyphs">29 %</text>
<text x="1661.60" y="222.60" font-size="17.5" font-weight="normal" fill="#1c9be0" textLength="10.17" lengthAdjust="spacingAndGlyphs">2</text>
<text x="414.05" y="396.70" font-size="19.5" font-weight="bold" fill="#1f2d45" textLength="44.10" lengthAdjust="spacingAndGlyphs">Logs</text>
<text x="506.30" y="397.20" font-size="15.5" font-weight="normal" fill="#6c7a8e" textLength="46.79" lengthAdjust="spacingAndGlyphs">Search</text>
<text x="1276.77" y="393.90" font-size="17" font-weight="normal" fill="#0d6efd" stroke="#0d6efd" stroke-width="0.6" textLength="141.90" lengthAdjust="spacingAndGlyphs">Download Sample</text>
<text x="1473.87" y="393.90" font-size="17" font-weight="normal" fill="#0d6efd" stroke="#0d6efd" stroke-width="0.6" textLength="55.60" lengthAdjust="spacingAndGlyphs">Upload</text>
<text x="1589.66" y="393.90" font-size="17" font-weight="normal" fill="#0d6efd" stroke="#0d6efd" stroke-width="0.6" textLength="148.06" lengthAdjust="spacingAndGlyphs">New Submittal Log</text>
<text x="424.10" y="440.70" font-size="15.5" font-weight="normal" fill="#27364d" stroke="#27364d" stroke-width="0.6" textLength="44.55" lengthAdjust="spacingAndGlyphs">Sr.No.</text>
<text x="516.20" y="440.70" font-size="15.5" font-weight="normal" fill="#27364d" stroke="#27364d" stroke-width="0.6" textLength="94.86" lengthAdjust="spacingAndGlyphs">Submittal No</text>
<text x="632.34" y="440.70" font-size="15.5" font-weight="normal" fill="#27364d" stroke="#27364d" stroke-width="0.6" textLength="92.84" lengthAdjust="spacingAndGlyphs">Document ...</text>
<text x="751.50" y="440.70" font-size="15.5" font-weight="normal" fill="#27364d" stroke="#27364d" stroke-width="0.6" textLength="86.89" lengthAdjust="spacingAndGlyphs">Submittal ...</text>
<text x="867.38" y="440.70" font-size="15.5" font-weight="normal" fill="#27364d" stroke="#27364d" stroke-width="0.6" textLength="78.16" lengthAdjust="spacingAndGlyphs">No of Days</text>
<text x="986.10" y="440.70" font-size="15.5" font-weight="normal" fill="#27364d" stroke="#27364d" stroke-width="0.6" textLength="98.28" lengthAdjust="spacingAndGlyphs">Submission...</text>
<text x="1102.88" y="440.70" font-size="15.5" font-weight="normal" fill="#27364d" stroke="#27364d" stroke-width="0.6" textLength="78.36" lengthAdjust="spacingAndGlyphs">Reply Date</text>
<text x="1220.67" y="440.70" font-size="15.5" font-weight="normal" fill="#27364d" stroke="#27364d" stroke-width="0.6" textLength="60.96" lengthAdjust="spacingAndGlyphs">Revision</text>
<text x="1338.20" y="440.70" font-size="15.5" font-weight="normal" fill="#27364d" stroke="#27364d" stroke-width="0.6" textLength="95.45" lengthAdjust="spacingAndGlyphs">Submittal S...</text>
<text x="1456.50" y="440.70" font-size="15.5" font-weight="normal" fill="#27364d" stroke="#27364d" stroke-width="0.6" textLength="96.10" lengthAdjust="spacingAndGlyphs">Approval St...</text>
<text x="1573.75" y="440.70" font-size="15.5" font-weight="normal" fill="#27364d" stroke="#27364d" stroke-width="0.6" textLength="69.53" lengthAdjust="spacingAndGlyphs">Comment</text>
<text x="1691.25" y="440.70" font-size="15.5" font-weight="normal" fill="#27364d" stroke="#27364d" stroke-width="0.6" textLength="45.66" lengthAdjust="spacingAndGlyphs">Action</text>
<text x="443.46" y="480.10" font-size="15.5" font-weight="normal" fill="#2f3a4b" textLength="8.13" lengthAdjust="spacingAndGlyphs">1</text>
<text x="873.75" y="480.10" font-size="15.5" font-weight="normal" fill="#2f3a4b" textLength="4.39" lengthAdjust="spacingAndGlyphs">-</text>
<text x="991.25" y="480.10" font-size="15.5" font-weight="normal" fill="#2f3a4b" textLength="77.13" lengthAdjust="spacingAndGlyphs">2025-02-04</text>
<text x="1107.74" y="480.10" font-size="15.5" font-weight="normal" fill="#dc3545" textLength="82.14" lengthAdjust="spacingAndGlyphs">Not Replied</text>
<text x="1226.39" y="480.10" font-size="15.5" font-weight="normal" fill="#2f3a4b" textLength="7.02" lengthAdjust="spacingAndGlyphs">1</text>
<text x="444.40" y="546.80" font-size="15.5" font-weight="normal" fill="#2f3a4b" textLength="8.40" lengthAdjust="spacingAndGlyphs">2</text>
<text x="873.75" y="546.80" font-size="15.5" font-weight="normal" fill="#2f3a4b" textLength="4.39" lengthAdjust="spacingAndGlyphs">-</text>
<text x="991.25" y="546.80" font-size="15.5" font-weight="normal" fill="#2f3a4b" textLength="77.13" lengthAdjust="spacingAndGlyphs">2025-02-04</text>
<text x="1107.74" y="546.80" font-size="15.5" font-weight="normal" fill="#dc3545" textLength="82.14" lengthAdjust="spacingAndGlyphs">Not Replied</text>
<text x="1226.39" y="546.80" font-size="15.5" font-weight="normal" fill="#2f3a4b" textLength="7.02" lengthAdjust="spacingAndGlyphs">1</text>
<text x="444.40" y="614.00" font-size="15.5" font-weight="normal" fill="#2f3a4b" textLength="8.19" lengthAdjust="spacingAndGlyphs">3</text>
<text x="873.75" y="614.00" font-size="15.5" font-weight="normal" fill="#2f3a4b" textLength="4.39" lengthAdjust="spacingAndGlyphs">-</text>
<text x="991.25" y="614.00" font-size="15.5" font-weight="normal" fill="#2f3a4b" textLength="77.13" lengthAdjust="spacingAndGlyphs">2025-02-04</text>
<text x="1107.74" y="614.00" font-size="15.5" font-weight="normal" fill="#dc3545" textLength="82.14" lengthAdjust="spacingAndGlyphs">Not Replied</text>
<text x="1226.39" y="614.00" font-size="15.5" font-weight="normal" fill="#2f3a4b" textLength="7.02" lengthAdjust="spacingAndGlyphs">1</text>
<text x="520.33" y="480.10" font-size="15.5" font-weight="normal" fill="#2f3a4b" textLength="91.93" lengthAdjust="spacingAndGlyphs">HH01-SUBM-</text>
<text x="521.30" y="501.40" font-size="15.5" font-weight="normal" fill="#2f3a4b" textLength="41.90" lengthAdjust="spacingAndGlyphs">00006</text>
<text x="520.23" y="546.80" font-size="15.5" font-weight="normal" fill="#2f3a4b" textLength="92.13" lengthAdjust="spacingAndGlyphs">HH01-SUBM-</text>
<text x="521.20" y="569.70" font-size="15.5" font-weight="normal" fill="#2f3a4b" textLength="42.31" lengthAdjust="spacingAndGlyphs">00005</text>
<text x="520.23" y="614.00" font-size="15.5" font-weight="normal" fill="#2f3a4b" textLength="92.13" lengthAdjust="spacingAndGlyphs">HH01-SUBM-</text>
<text x="521.20" y="636.80" font-size="15.5" font-weight="normal" fill="#2f3a4b" textLength="41.34" lengthAdjust="spacingAndGlyphs">00004</text>
<text x="638.70" y="480.10" font-size="15.5" font-weight="normal" fill="#2f3a4b" textLength="60.30" lengthAdjust="spacingAndGlyphs">20121-r1</text>
<text x="638.50" y="546.80" font-size="15.5" font-weight="normal" fill="#2f3a4b" textLength="65.48" lengthAdjust="spacingAndGlyphs">20112-PC</text>
<text x="638.50" y="614.00" font-size="15.5" font-weight="normal" fill="#2f3a4b" textLength="64.35" lengthAdjust="spacingAndGlyphs">2305-RQ-</text>
<text x="638.50" y="636.80" font-size="15.5" font-weight="normal" fill="#2f3a4b" textLength="57.46" lengthAdjust="spacingAndGlyphs">ARC-001</text>
<text x="755.35" y="480.10" font-size="15.5" font-weight="normal" fill="#2f3a4b" textLength="20.95" lengthAdjust="spacingAndGlyphs">RQ</text>
<text x="755.80" y="546.80" font-size="15.5" font-weight="normal" fill="#2f3a4b" textLength="87.29" lengthAdjust="spacingAndGlyphs">20112-PC-01</text>
<text x="755.43" y="614.00" font-size="15.5" font-weight="normal" fill="#2f3a4b" textLength="83.06" lengthAdjust="spacingAndGlyphs">RQ FOR PES</text>
<text x="755.42" y="636.80" font-size="15.5" font-weight="normal" fill="#2f3a4b" textLength="53.23" lengthAdjust="spacingAndGlyphs">FOR RQ</text>
<text x="756.30" y="658.90" font-size="15.5" font-weight="normal" fill="#2f3a4b" textLength="64.18" lengthAdjust="spacingAndGlyphs">SERVICES</text>
<text x="1343.60" y="480.10" font-size="15.5" font-weight="normal" fill="#28a745" textLength="68.04" lengthAdjust="spacingAndGlyphs">Approved</text>
<text x="1460.90" y="480.10" font-size="15.5" font-weight="normal" fill="#28a745" textLength="68.24" lengthAdjust="spacingAndGlyphs">Approved</text>
<text x="1342.96" y="546.80" font-size="15.5" font-weight="normal" fill="#2d9cdb" textLength="44.11" lengthAdjust="spacingAndGlyphs">Under</text>
<text x="1343.05" y="569.70" font-size="15.5" font-weight="normal" fill="#2d9cdb" textLength="48.38" lengthAdjust="spacingAndGlyphs">Review</text>
<text x="1459.88" y="546.80" font-size="15.5" font-weight="normal" fill="#f6b52e" textLength="57.85" lengthAdjust="spacingAndGlyphs">Pending</text>
<text x="1343.60" y="614.00" font-size="15.5" font-weight="normal" fill="#28a745" textLength="68.04" lengthAdjust="spacingAndGlyphs">Approved</text>
<text x="1460.90" y="614.00" font-size="15.5" font-weight="normal" fill="#28a745" textLength="68.24" lengthAdjust="spacingAndGlyphs">Approved</text>
<text x="1620.70" y="724.10" font-size="15" font-weight="normal" fill="#c6c9ce" stroke="#c6c9ce" stroke-width="0.6" textLength="190.64" lengthAdjust="spacingAndGlyphs">Showing 1 to 3 of 3 entries</text>
<text x="1573.83" y="758.90" font-size="18" font-weight="normal" fill="#576172" stroke="#576172" stroke-width="0.6" textLength="37.37" lengthAdjust="spacingAndGlyphs">First</text>
<text x="1680.60" y="758.90" font-size="18" font-weight="normal" fill="#576172" stroke="#576172" stroke-width="0.6" textLength="10.01" lengthAdjust="spacingAndGlyphs">1</text>
<text x="1760.96" y="758.90" font-size="18" font-weight="normal" fill="#576172" stroke="#576172" stroke-width="0.6" textLength="35.34" lengthAdjust="spacingAndGlyphs">Last</text>
<text x="1895.60" y="427.60" font-size="13" font-weight="normal" fill="#ffffff" textLength="8.06" lengthAdjust="spacingAndGlyphs">3</text>
<text x="1895.60" y="479.40" font-size="13" font-weight="normal" fill="#ffffff" textLength="8.06" lengthAdjust="spacingAndGlyphs">0</text>
</svg>

<!-- sidebar icons above sidebar -->
<svg class="ov" style="z-index:11" viewBox="0 0 1920 912">
<defs><clipPath id="avclip2"><circle cx="31.5" cy="131.5" r="12.7"/></clipPath></defs><polyline points="24.4,26 35.6,36 24.4,46" fill="none" stroke="#fff" stroke-width="3.8" stroke-linecap="round" stroke-linejoin="round"/>
<circle cx="31.5" cy="131.5" r="12.7" fill="#fff"/>
<g clip-path="url(#avclip2)">
<path d="M22,146 C22,139 25,137.5 28.5,136.5 L31.5,139 L34.5,136.5 C38,137.5 41,139 41,146 Z" fill="#7d7d7d"/>
<path d="M30.2,137.5 L31.5,143 L32.8,137.5 Z" fill="#e8e8e8"/>
<ellipse cx="31.5" cy="129.6" rx="3.7" ry="4.6" fill="#cfcfcf"/>
<path d="M27.6,128.6 C27.4,124.6 29.2,123.4 31.5,123.4 C33.8,123.4 35.6,124.6 35.4,128.6 C34.6,126.6 33.2,126.2 31.5,126.2 C29.8,126.2 28.4,126.6 27.6,128.6 Z" fill="#1a1a1a"/>
<rect x="19" y="144" width="25" height="2" fill="#fff"/>
</g>
<g fill="#fff">
<rect x="18" y="177.6" width="2.4" height="19.4"/>
<rect x="18" y="194.6" width="26" height="2.4"/>
<rect x="23.2" y="187" width="2.9" height="5.3"/>
<rect x="27.6" y="181.7" width="2.9" height="10.6"/>
<rect x="32" y="184" width="2.9" height="8.3"/>
<rect x="36.4" y="180" width="2.9" height="12.3"/>
</g>
<rect x="19" y="236" width="24" height="17.2" rx="2" fill="none" stroke="#fff" stroke-width="2.3"/>
<polyline points="19.8,237.5 31,246.2 42.2,237.5" fill="none" stroke="#fff" stroke-width="2.3" stroke-linejoin="round"/>
<rect x="21" y="286" width="20.2" height="25" fill="#c9ced6"/>
<g fill="#566272">
<rect x="23.2" y="288.3" width="2.6" height="2.4"/><rect x="27.2" y="288.3" width="2.6" height="2.4"/><rect x="31.2" y="288.3" width="2.6" height="2.4"/><rect x="35.2" y="288.3" width="2.6" height="2.4"/>
<rect x="23.2" y="292.3" width="2.6" height="2.4"/><rect x="27.2" y="292.3" width="2.6" height="2.4"/><rect x="31.2" y="292.3" width="2.6" height="2.4"/><rect x="35.2" y="292.3" width="2.6" height="2.4"/>
<rect x="23.2" y="296.3" width="2.6" height="2.4"/><rect x="27.2" y="296.3" width="2.6" height="2.4"/><rect x="31.2" y="296.3" width="2.6" height="2.4"/><rect x="35.2" y="296.3" width="2.6" height="2.4"/>
<rect x="23.2" y="300.3" width="2.6" height="2.4"/><rect x="27.2" y="300.3" width="2.6" height="2.4"/><rect x="31.2" y="300.3" width="2.6" height="2.4"/><rect x="35.2" y="300.3" width="2.6" height="2.4"/>
<rect x="23" y="304.3" width="15" height="5"/>
</g>
<rect x="28.2" y="305.5" width="5.8" height="5.5" fill="#c9ced6"/>
<circle cx="31.5" cy="797.4" r="12.6" fill="#0f6fc1"/>
<path d="M27.4,793.6 C27.4,790.6 29.3,789.2 31.7,789.2 C34.3,789.2 36,790.9 36,793.2 C36,796.6 32.7,796.6 32.7,799.6" fill="none" stroke="#fff" stroke-width="2.6" stroke-linecap="round"/>
<circle cx="32.6" cy="803.6" r="1.6" fill="#fff"/>
<circle cx="31.5" cy="866.5" r="12.6" fill="#e84b3b"/>
<path d="M27.2,861.6 A6.6,6.6 0 1 0 35.8,861.6" fill="none" stroke="#fff" stroke-width="2" stroke-linecap="round"/>
<line x1="31.5" y1="858.6" x2="31.5" y2="866.6" stroke="#fff" stroke-width="2" stroke-linecap="round"/>

</svg>

<!-- dropdown menu -->
<div class="a" style="left:147px;top:318px;width:202px;height:75px;background:#fff;border-radius:0 0 4px 4px;box-shadow:3px 4px 6px rgba(0,0,0,.38), 0 0 1px rgba(0,0,0,.3);z-index:12"></div>
<div class="a" style="left:151px;top:355px;width:197px;height:1px;background:#e1e4e8;z-index:12"></div>
<svg class="ov" style="z-index:13" viewBox="0 0 1920 912">
<text x="159.93" y="338.60" font-size="14.5" font-weight="normal" fill="#3d4a5c" textLength="26.80" lengthAdjust="spacingAndGlyphs">Edit</text>
<text x="159.93" y="376.00" font-size="14.5" font-weight="normal" fill="#3d4a5c" textLength="45.04" lengthAdjust="spacingAndGlyphs">Delete</text>
</svg>
<!-- annotations -->
<svg class="ov" style="z-index:14" viewBox="0 0 1920 912">
<rect x="137" y="309.1" width="224.8" height="96.8" fill="none" stroke="#ff0000" stroke-width="2.1"/>
<line x1="326.6" y1="280.2" x2="337" y2="292" stroke="#ff0000" stroke-width="2"/>
<polygon points="345.4,302.2 330.3,295.3 341.4,286.8" fill="#ff0000"/>
<line x1="230.9" y1="305.2" x2="227.8" y2="333" stroke="#ff0000" stroke-width="2"/>
<polygon points="220.4,331.2 234.9,333.5 225.3,347" fill="#ff0000"/>
</svg>
</body></html>
